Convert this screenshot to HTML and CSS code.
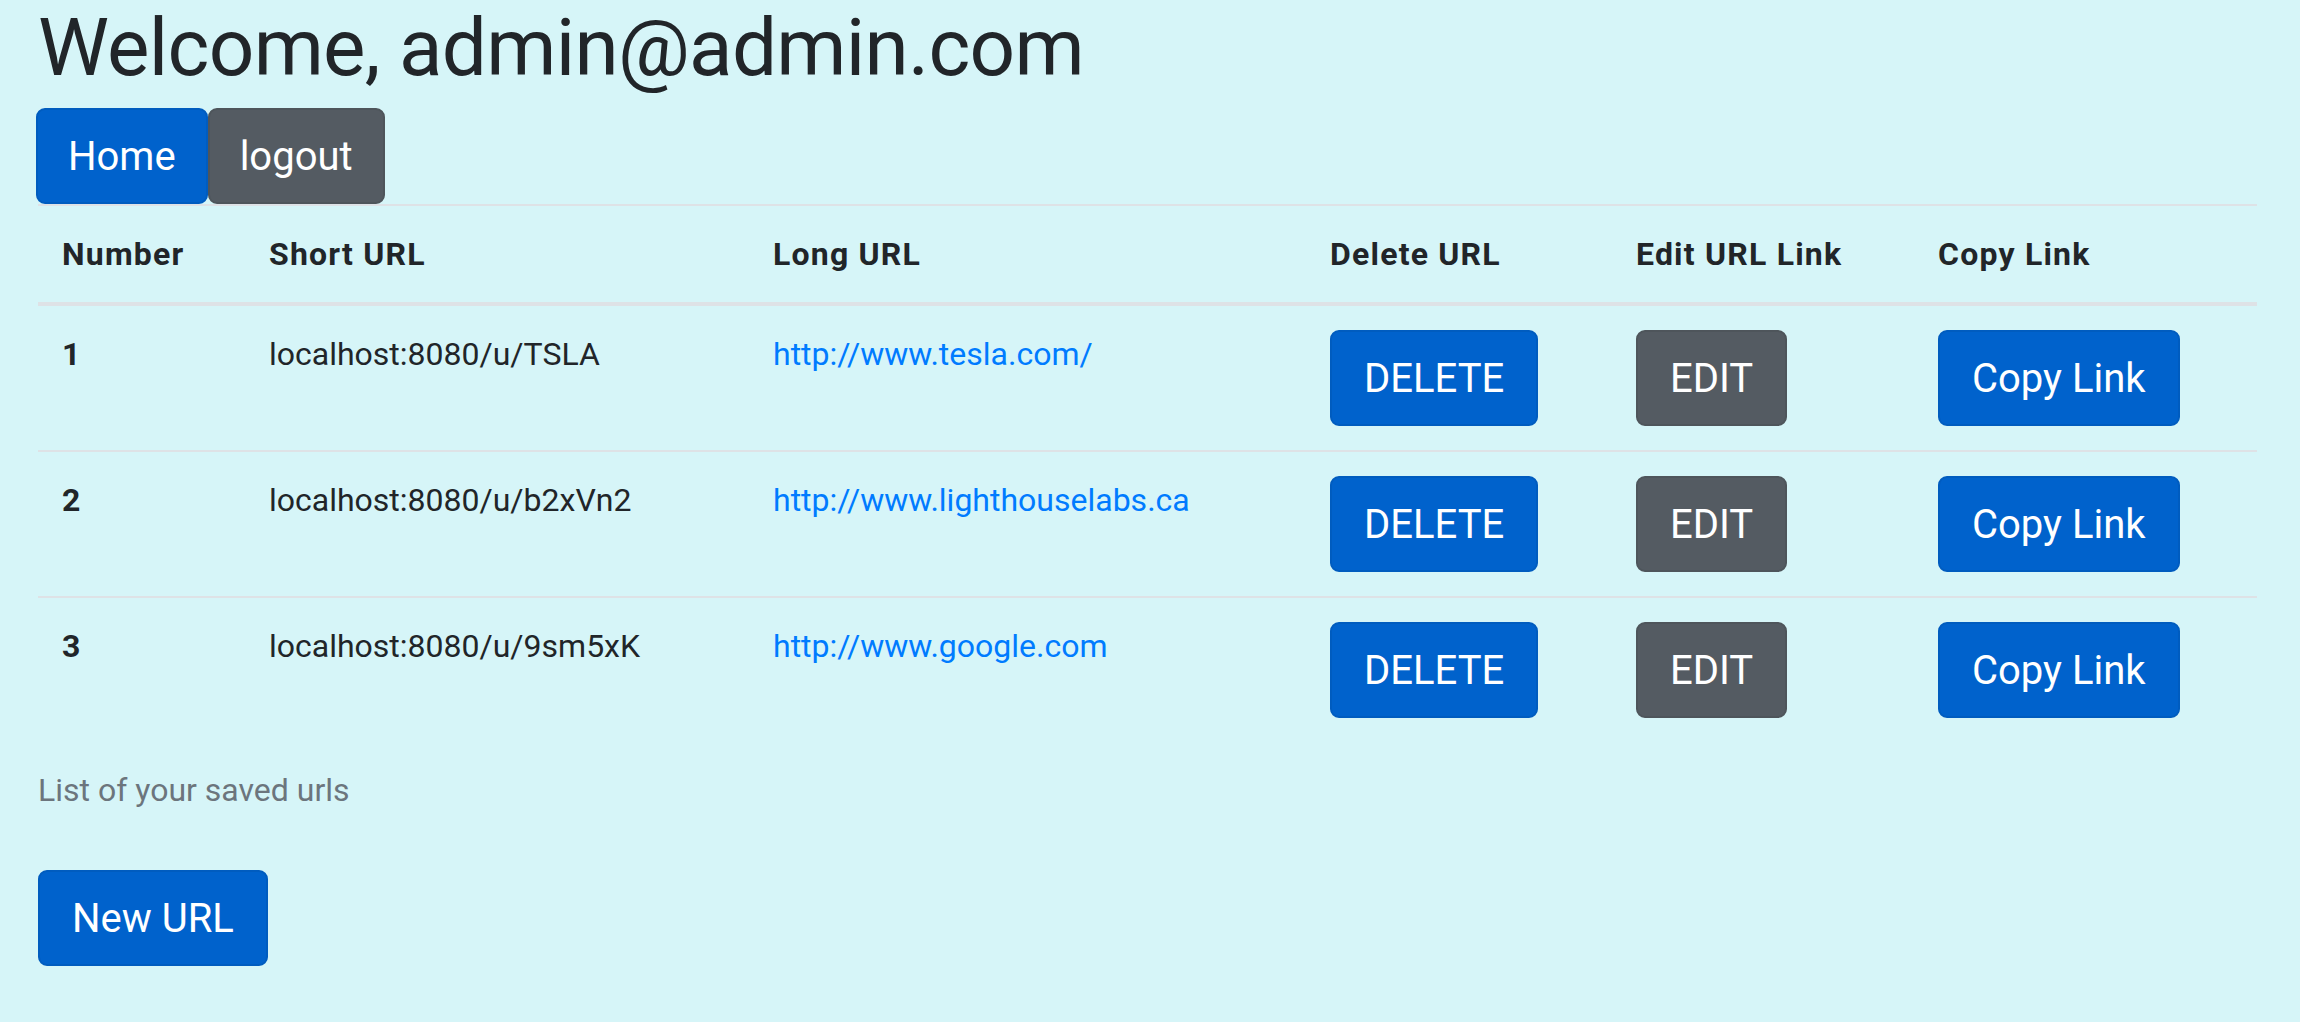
FILE: index.html
```html
<!DOCTYPE html>
<html lang="en">
<head>
<meta charset="utf-8">
<title>URLs</title>
<link rel="stylesheet" href="styles.css">
</head>
<body>
<main class="page">
  <h1 class="welcome">Welcome, admin@admin.com</h1>
  <nav class="nav">
    <a class="btn btn-primary btn-nav" href="#">Home</a>
    <a class="btn btn-secondary btn-nav" href="#">logout</a>
  </nav>
  <table class="urls">
    <caption>List of your saved urls</caption>
    <thead>
      <tr>
        <th class="c-num">Number</th>
        <th class="c-short">Short URL</th>
        <th class="c-long">Long URL</th>
        <th class="c-del">Delete URL</th>
        <th class="c-edit">Edit URL Link</th>
        <th class="c-copy">Copy Link</th>
      </tr>
    </thead>
    <tbody>
      <tr>
        <th>1</th>
        <td>localhost:8080/u/TSLA</td>
        <td><a class="link" href="#">http://www.tesla.com/</a></td>
        <td><button class="btn btn-primary">DELETE</button></td>
        <td><button class="btn btn-secondary">EDIT</button></td>
        <td><button class="btn btn-primary">Copy Link</button></td>
      </tr>
      <tr>
        <th>2</th>
        <td>localhost:8080/u/b2xVn2</td>
        <td><a class="link" href="#">http://www.lighthouselabs.ca</a></td>
        <td><button class="btn btn-primary">DELETE</button></td>
        <td><button class="btn btn-secondary">EDIT</button></td>
        <td><button class="btn btn-primary">Copy Link</button></td>
      </tr>
      <tr>
        <th>3</th>
        <td>localhost:8080/u/9sm5xK</td>
        <td><a class="link" href="#">http://www.google.com</a></td>
        <td><button class="btn btn-primary">DELETE</button></td>
        <td><button class="btn btn-secondary">EDIT</button></td>
        <td><button class="btn btn-primary">Copy Link</button></td>
      </tr>
    </tbody>
  </table>
  <a class="btn btn-primary" href="#">New URL</a>
</main>
</body>
</html>
```
FILE: styles.css
```css
html, body {
  margin: 0;
  padding: 0;
}
body {
  background: #d6f5f8;
  color: #212529;
  font-family: Roboto, "Liberation Sans", Arial, sans-serif;
  font-size: 32px;
  line-height: 1.5;
}
.page {
  padding: 0 0 40px 38px;
}
.welcome {
  margin: 0 0 12px 0;
  font-size: 80px;
  font-weight: 400;
  line-height: 96px;
  letter-spacing: -0.7px;
}
.nav {
  display: flex;
  margin-left: -2px;
}
.btn {
  display: inline-block;
  box-sizing: border-box;
  font-family: inherit;
  font-size: 40px;
  line-height: 60px;
  padding: 17px 32px 15px;
  border: 2px solid transparent;
  border-radius: 9px;
  color: #fff;
  text-decoration: none;
  cursor: pointer;
  margin: 0;
}
.btn-nav {
  padding-left: 30px;
  padding-right: 30px;
}
.btn-primary {
  background: #0062cc;
  border-color: #005cbf;
}
.btn-secondary {
  background: #545b62;
  border-color: #4e555b;
}
.urls {
  width: 2219px;
  table-layout: fixed;
  border-collapse: collapse;
  margin-bottom: 32px;
}
.urls caption {
  caption-side: bottom;
  text-align: left;
  color: #6c757d;
  padding: 24px 0;
}
.urls th,
.urls td {
  padding: 24px;
  text-align: left;
  vertical-align: top;
  border-top: 2px solid #dee2e6;
}
.urls th {
  font-weight: 700;
}
.urls thead th {
  vertical-align: bottom;
  border-bottom: 4px solid #dee2e6;
  letter-spacing: 1.2px;
}
.c-num { width: 159px; }
.c-short { width: 456px; }
.c-long { width: 509px; }
.c-del { width: 258px; }
.c-edit { width: 254px; }
.c-copy { width: 295px; }
.link {
  color: #007bff;
  text-decoration: none;
}
```
